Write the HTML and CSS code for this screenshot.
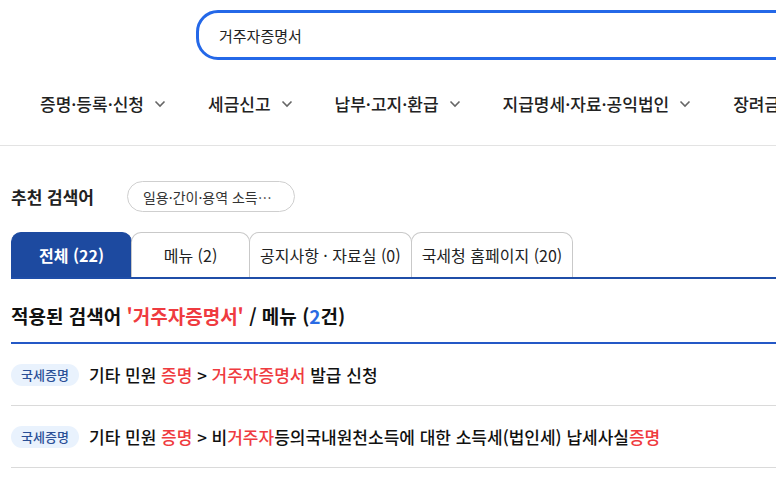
FILE: index.html
```html
<!DOCTYPE html>
<html lang="ko">
<head>
<meta charset="utf-8">
<title>검색 결과</title>
<link rel="stylesheet" href="styles.css">
</head>
<body>
<div class="page">
  <header class="top">
    <div class="search">거주자증명서</div>
    <nav class="gnb">
      <span class="gnb-item">증명·등록·신청<svg class="chev" viewBox="0 0 12 8"><path d="M1.5 1.5 6 6l4.5-4.5"/></svg></span>
      <span class="gnb-item">세금신고<svg class="chev" viewBox="0 0 12 8"><path d="M1.5 1.5 6 6l4.5-4.5"/></svg></span>
      <span class="gnb-item">납부·고지·환급<svg class="chev" viewBox="0 0 12 8"><path d="M1.5 1.5 6 6l4.5-4.5"/></svg></span>
      <span class="gnb-item">지급명세·자료·공익법인<svg class="chev" viewBox="0 0 12 8"><path d="M1.5 1.5 6 6l4.5-4.5"/></svg></span>
      <span class="gnb-item">장려금</span>
    </nav>
  </header>
  <main class="content">
    <div class="recommend">
      <strong class="rec-label">추천 검색어</strong>
      <span class="chip">일용·간이·용역 소득…</span>
    </div>
    <div class="tabs">
      <span class="tab active">전체 (22)</span>
      <span class="tab">메뉴 (2)</span>
      <span class="tab">공지사항 · 자료실 (0)</span>
      <span class="tab">국세청 홈페이지 (20)</span>
    </div>
    <h2 class="result-title">적용된 검색어 <em class="hl">'거주자증명서'</em> / 메뉴 (<b class="count">2</b>건)</h2>
    <ul class="results">
      <li class="result"><span class="badge">국세증명</span><span class="path">기타 민원 <em class="hl">증명</em> &gt; <em class="hl">거주자증명서</em> 발급 신청</span></li>
      <li class="result"><span class="badge">국세증명</span><span class="path">기타 민원 <em class="hl">증명</em> &gt; 비<em class="hl">거주자</em>등의국내원천소득에 대한 소득세(법인세) 납세사실<em class="hl">증명</em></span></li>
    </ul>
  </main>
</div>
</body>
</html>
```
FILE: styles.css
```css
html, body {
  margin: 0;
  padding: 0;
  overflow: hidden;
  background: #fff;
}
body {
  font-family: "Noto Sans CJK KR", "Noto Sans", sans-serif;
  color: #222;
}
.page {
  width: 1100px;
}
.top {
  padding-top: 10px;
  border-bottom: 1px solid #e3e3e3;
}
.search {
  box-sizing: border-box;
  margin-left: 196px;
  width: 860px;
  height: 50px;
  border: 3px solid #2468e8;
  border-radius: 22px;
  padding-left: 20px;
  display: flex;
  align-items: center;
  font-size: 15px;
  color: #222;
}
.gnb {
  display: flex;
  gap: 42px;
  padding: 34px 0 31px 40px;
  height: 20px;
}
.gnb-item {
  display: flex;
  align-items: center;
  font-size: 17px;
  font-weight: 500;
  line-height: 20px;
  white-space: nowrap;
  color: #222;
}
.chev {
  width: 12px;
  height: 8px;
  margin-left: 10px;
  fill: none;
  stroke: #666;
  stroke-width: 1.6;
}
.content {
  padding-left: 11px;
}
.recommend {
  display: flex;
  align-items: center;
  gap: 33px;
  margin-top: 35px;
}
.rec-label {
  font-size: 17px;
  font-weight: 700;
  color: #222;
}
.chip {
  box-sizing: border-box;
  height: 31px;
  width: 168px;
  border: 1px solid #cfcfcf;
  border-radius: 16px;
  padding: 0 15px;
  display: flex;
  align-items: center;
  font-size: 14px;
  color: #333;
  white-space: nowrap;
}
.tabs {
  display: flex;
  margin-top: 20px;
  border-bottom: 2px solid #1f4ea8;
}
.tab {
  box-sizing: border-box;
  height: 45px;
  min-width: 119px;
  padding: 0 10px;
  margin-right: -1px;
  border: 1px solid #c9c9c9;
  border-bottom: none;
  border-radius: 10px 10px 0 0;
  display: flex;
  align-items: center;
  justify-content: center;
  font-size: 16px;
  color: #222;
  white-space: nowrap;
}
.tab.active {
  min-width: 121px;
  background: #1d4aa0;
  border-color: #1d4aa0;
  color: #fff;
  font-weight: 700;
}
.result-title {
  margin: 0;
  padding: 26px 0 15px;
  line-height: 22px;
  font-size: 19px;
  font-weight: 700;
  color: #111;
  border-bottom: 2px solid #2458c6;
}
.hl {
  font-style: normal;
  color: #ef3b40;
}
.count {
  color: #2a6be3;
  font-weight: 700;
}
.results {
  list-style: none;
  margin: 0;
  padding: 0;
}
.result {
  display: flex;
  align-items: center;
  gap: 10px;
  height: 61px;
  border-bottom: 1px solid #dadada;
}
.badge {
  box-sizing: border-box;
  height: 22px;
  width: 68px;
  border-radius: 11px;
  background: #e9f2fd;
  color: #2a4f96;
  font-size: 13px;
  font-weight: 500;
  display: flex;
  align-items: center;
  justify-content: center;
  flex: none;
}
.path {
  font-size: 17px;
  font-weight: 500;
  color: #111;
  white-space: nowrap;
}
```
